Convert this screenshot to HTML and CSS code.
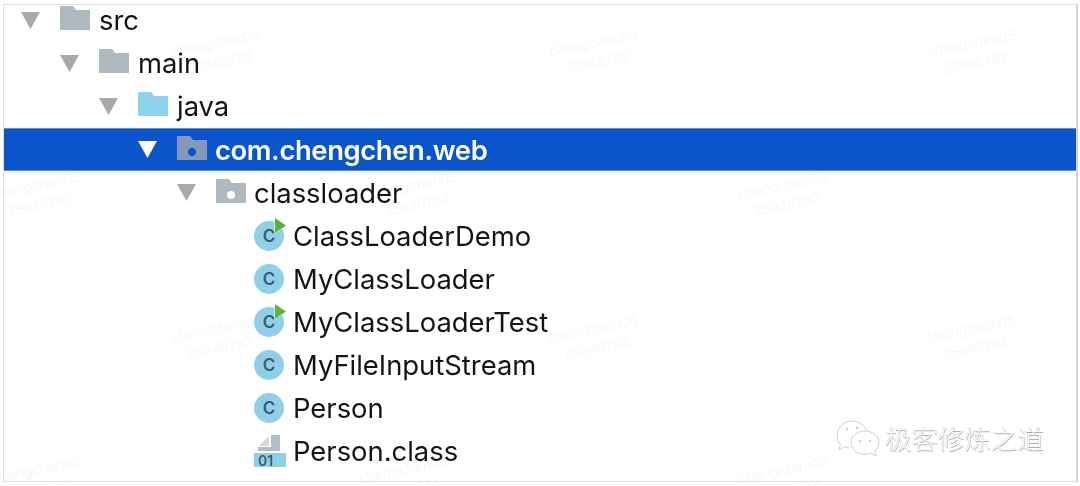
FILE: index.html
```html
<!DOCTYPE html>
<html lang="zh">
<head>
<meta charset="utf-8">
<title>Project tree</title>
<link rel="stylesheet" href="styles.css">
</head>
<body>
<svg class="defs" width="0" height="0" aria-hidden="true">
  <symbol id="tri" viewBox="0 0 19 17"><path d="M0 0H19L9.5 17Z"/></symbol>
  <symbol id="folder" viewBox="0 0 30 24"><path d="M0 0H13L16 4H30V24H0Z"/></symbol>
  <symbol id="play" viewBox="0 0 13 17"><path d="M1 1L12 8.5L1 16Z"/></symbol>
</svg>
<div class="watermarks">
  <div class="wm w1">chengchen05<br>35946782</div>
  <div class="wm w2">chengchen05<br>35946782</div>
  <div class="wm w3">chengchen05<br>35946782</div>
  <div class="wm w4">chengchen05<br>35946782</div>
  <div class="wm w5">chengchen05<br>35946782</div>
  <div class="wm w6">chengchen05<br>35946782</div>
  <div class="wm w7">chengchen05<br>35946782</div>
  <div class="wm w8">chengchen05<br>35946782</div>
  <div class="wm w9">chengchen05<br>35946782</div>
  <div class="wm w10">chengchen05<br>35946782</div>
  <div class="wm w11">chengchen05<br>35946782</div>
  <div class="wm w12">chengchen05<br>35946782</div>
</div>
<main class="frame">
  <div class="tree">
    <div class="row d0"><svg class="tri"><use href="#tri"/></svg><svg class="folder grey"><use href="#folder"/></svg><span class="label">src</span></div>
    <div class="row d1"><svg class="tri"><use href="#tri"/></svg><svg class="folder grey"><use href="#folder"/></svg><span class="label">main</span></div>
    <div class="row d2"><svg class="tri"><use href="#tri"/></svg><svg class="folder sky"><use href="#folder"/></svg><span class="label">java</span></div>
    <div class="row d3 selected"><svg class="tri"><use href="#tri"/></svg><span class="pkg"><svg class="folder"><use href="#folder"/></svg><i class="dot"></i></span><span class="label">com.chengchen.web</span></div>
    <div class="row d4"><svg class="tri"><use href="#tri"/></svg><span class="pkg"><svg class="folder grey"><use href="#folder"/></svg><i class="dot"></i></span><span class="label">classloader</span></div>
    <div class="row leaf"><span class="cls">C<svg class="play"><use href="#play"/></svg></span><span class="label">ClassLoaderDemo</span></div>
    <div class="row leaf"><span class="cls">C</span><span class="label">MyClassLoader</span></div>
    <div class="row leaf"><span class="cls">C<svg class="play"><use href="#play"/></svg></span><span class="label">MyClassLoaderTest</span></div>
    <div class="row leaf"><span class="cls">C</span><span class="label">MyFileInputStream</span></div>
    <div class="row leaf"><span class="cls">C</span><span class="label">Person</span></div>
    <div class="row leaf"><span class="binary"><svg class="doc" viewBox="0 0 22 16"><path class="doc-body" d="M13 0H22V16H0V12H13Z"/><path class="doc-fold" d="M11 1V11H1Z"/></svg><span class="bits">01</span></span><span class="label">Person.class</span></div>
  </div>
</main>
<div class="brand">
  <svg class="wechat" viewBox="0 0 44 38" fill="none">
    <path class="bubble" d="M14 29C12 29 10 28.5 8.500 27.800L3 31L4.500 25.500C2 23 1 20.500 1 17.500C1 9 7.500 2 16 2C23 2 29 6 31 12"/>
    <path class="bubble" d="M29 12C37 12 43 17.500 43 23.500C43 27 41.500 29.500 39 32L40 37L35 34C33 35 31 35.300 29 35.300C21 35.300 15 30 15 23.500C15 17.500 21 12 29 12Z"/>
    <circle class="eye" cx="11" cy="10" r="1.300"/><circle class="eye" cx="21" cy="9" r="1.300"/>
    <circle class="eye" cx="24" cy="22" r="1.300"/><circle class="eye" cx="34" cy="22" r="1.300"/>
  </svg>
  <span class="brand-name">极客修炼之道</span>
</div>
</body>
</html>
```
FILE: styles.css
```css
* { box-sizing: border-box; }
html, body { margin: 0; height: 100%; background: #fff; overflow: hidden; }
body { position: relative; width: 1080px; height: 486px; padding: 4px 2px 4px 3px; font-family: "Inter", "Liberation Sans", sans-serif; }
.defs { position: absolute; }

.frame {
  position: relative;
  height: 478px;
  border: 1px solid #e0e0e0;
  border-right: 2px solid #d4d4d4;
  overflow: hidden;
}
.tree { margin-top: -6.300px; filter: blur(0.45px); }
.row {
  display: flex;
  align-items: center;
  height: 43.120px;
  color: #121517;
  font-size: 27.400px;
}
.d0 { padding-left: 17px; }
.d1 { padding-left: 56px; }
.d2 { padding-left: 95px; }
.d3 { padding-left: 134px; }
.d4 { padding-left: 173px; }
.leaf { padding-left: 250px; }

.selected {
  background: #0b55cc;
  color: #fff;
  font-weight: 600;
  box-shadow: inset 0 1px 0 #5d8fdf, inset 0 -1px 0 #5d8fdf;
}
.tri { flex: none; width: 19px; height: 17px; margin-right: 20px; fill: #a9a9a9; }
.selected .tri { fill: #fff; }
.folder { flex: none; display: block; width: 30px; height: 24px; fill: #8698b7; margin-top: -4px; }
.grey { fill: #aeb9c0; }
.sky { fill: #8cd3ec; }
.label { margin-left: 9px; white-space: nowrap; }
.selected .label { margin-left: 8px; letter-spacing: -0.4px; }
.d4 .label { margin-left: 8px; }

.pkg { position: relative; flex: none; width: 30px; }
.dot { position: absolute; left: 11px; top: 8px; width: 8px; height: 8px; border-radius: 50%; background: #0b55cc; }
.d4 .dot { background: #fff; }

.cls {
  position: relative;
  flex: none;
  width: 30px;
  height: 30px;
  border-radius: 50%;
  background: #8dd0ea;
  color: #3c5a69;
  font-size: 17px;
  font-weight: 600;
  line-height: 30px;
  text-align: center;
}
.play { position: absolute; left: 20px; top: -4px; width: 13px; height: 17px; fill: #5cb338; stroke: #fff; stroke-width: 1; paint-order: stroke; }

.binary { position: relative; flex: none; display: block; width: 32px; height: 32px; margin-right: -2px; }
.doc { position: absolute; left: 4px; top: 0; width: 22px; height: 16px; }
.doc-body { fill: #b5bec4; }
.doc-fold { fill: #d5d9dc; }
.bits {
  position: absolute;
  left: 0;
  bottom: 0;
  width: 32px;
  height: 14px;
  padding-left: 4px;
  background: #8dd0ea;
  color: #3c5a69;
  font-size: 14px;
  font-weight: 600;
  line-height: 15px;
}

.watermarks { position: absolute; inset: 0; }
.wm {
  position: absolute;
  width: 110px;
  color: #f8f8f9;
  font-size: 15px;
  line-height: 20px;
  text-align: center;
  transform: rotate(-11deg);
  font-family: "Liberation Sans", sans-serif;
}
.w1 { left: 163px; top: 33px; }
.w2 { left: 540px; top: 33px; }
.w3 { left: 918px; top: 33px; }
.w4 { left: -17px; top: 175px; }
.w5 { left: 360px; top: 175px; }
.w6 { left: 730px; top: 175px; }
.w7 { left: 163px; top: 318px; }
.w8 { left: 540px; top: 318px; }
.w9 { left: 918px; top: 318px; }
.w10 { left: -17px; top: 460px; }
.w11 { left: 350px; top: 460px; }
.w12 { left: 730px; top: 460px; }

.brand { position: absolute; left: 836px; top: 419px; display: flex; align-items: center; gap: 5px; }
.wechat { flex: none; width: 44px; height: 38px; }
.bubble { stroke: #cfcfcf; stroke-width: 1; }
.eye { fill: #d0d0d0; }
.brand-name {
  font-family: "Noto Sans CJK SC", sans-serif;
  font-size: 26.500px;
  font-weight: 300;
  line-height: 38px;
  color: #fcfcfc;
  text-shadow: 0.6px 0.6px 0 #b0b0b0, -0.4px -0.4px 0 #cfcfcf;
}
```
